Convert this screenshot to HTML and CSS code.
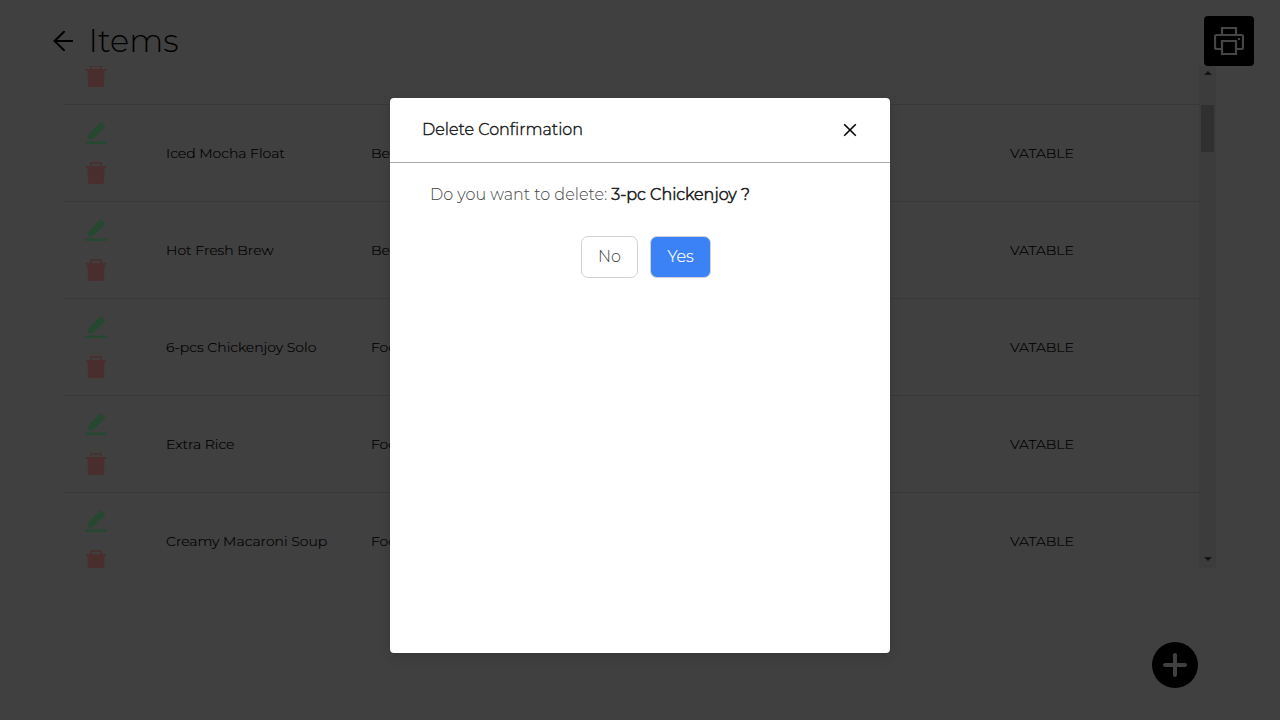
FILE: index.html
```html
<!DOCTYPE html>
<html lang="en">
<head>
<meta charset="utf-8">
<title>Items</title>
<link rel="stylesheet" href="styles.css">
</head>
<body>
<svg width="0" height="0" class="defs">
  <symbol id="edit" viewBox="0 0 22 22"><path d="M3.2 17.3 3.6 12.2 15 .8Q15.8 0 16.6.8L19.8 4Q20.4 4.6 19.8 5.4L9 16.3Q8 17.3 6.6 17.3ZM0 20.8Q0 19.6 1 19.6H21Q22 19.6 22 20.8Q22 22 21 22H1Q0 22 0 20.8Z"/></symbol>
  <symbol id="trash" viewBox="0 0 22 22"><path fill-rule="evenodd" d="M5 4V1.8Q5 0 6.8 0H15.2Q17 0 17 1.8V4H21V6H19.6L19 20Q18.9 22 17 22H5Q3.1 22 3 20L2.4 6H1V4ZM6.7 4H15.3V1.8H6.7Z"/></symbol>
</svg>
<header class="topbar">
  <svg class="back" viewBox="0 0 20 20"><path d="M11 .8 1.6 10l9.4 9.2M1.4 10H20"/></svg>
  <h1 class="title">Items</h1>
  <button class="print" aria-label="Print"><svg viewBox="0 0 30 30"><path d="M8 9V2H22V9M8 23H2.5Q1 23 1 21.5V10.5Q1 9 2.5 9H27.5Q29 9 29 10.5V21.5Q29 23 27.5 23H22M8 15H22V28H8Z"/><path class="dot" d="M24 12h2v2h-2z"/></svg></button>
</header>
<main class="list">
  <div class="rows">
    <div class="row first"><div class="actions"><svg class="edit"><use href="#edit"/></svg><svg class="trash"><use href="#trash"/></svg></div></div>
    <div class="row"><div class="actions"><svg class="edit"><use href="#edit"/></svg><svg class="trash"><use href="#trash"/></svg></div><span>Iced Mocha Float</span><span>Beverage</span><span>VATABLE</span></div>
    <div class="row"><div class="actions"><svg class="edit"><use href="#edit"/></svg><svg class="trash"><use href="#trash"/></svg></div><span>Hot Fresh Brew</span><span>Beverage</span><span>VATABLE</span></div>
    <div class="row"><div class="actions"><svg class="edit"><use href="#edit"/></svg><svg class="trash"><use href="#trash"/></svg></div><span>6-pcs Chickenjoy Solo</span><span>Food</span><span>VATABLE</span></div>
    <div class="row"><div class="actions"><svg class="edit"><use href="#edit"/></svg><svg class="trash"><use href="#trash"/></svg></div><span>Extra Rice</span><span>Food</span><span>VATABLE</span></div>
    <div class="row"><div class="actions"><svg class="edit"><use href="#edit"/></svg><svg class="trash"><use href="#trash"/></svg></div><span>Creamy Macaroni Soup</span><span>Food</span><span>VATABLE</span></div>
  </div>
  <div class="scrollbar"><i class="up"></i><div class="thumb"></div><i class="down"></i></div>
</main>
<button class="add" aria-label="Add"><svg viewBox="0 0 24 24"><path d="M12 2V22M2 12H22"/></svg></button>
<section class="modal" role="dialog">
  <div class="modal-head"><h2>Delete Confirmation</h2><svg viewBox="0 0 14 14"><path d="M1.2 1.2 12.8 12.8M12.8 1.2 1.2 12.8"/></svg></div>
  <p class="question"><span class="ask">Do you want to delete:</span><strong>3-pc Chickenjoy ?</strong></p>
  <div class="buttons"><button class="no">No</button><button class="yes">Yes</button></div>
</section>
</body>
</html>
```
FILE: styles.css
```css
* { box-sizing: border-box; }
body { margin: 0; width: 1280px; height: 720px; overflow: hidden; background: #404040; color: #000; font-family: Montserrat, Inter, sans-serif; font-weight: 300; }
h1, h2, p { margin: 0; }
button { padding: 0; border: 0; font: inherit; }
.defs { position: absolute; }
.topbar { display: flex; height: 66px; padding: 16px 26px 0 53px; }
.back { width: 20px; height: 20px; margin-top: 15px; fill: none; stroke: #000; stroke-width: 2; stroke-linecap: round; }
.title { margin-left: 15.5px; line-height: 50px; font-size: 32px; font-weight: 300; }
.print { display: flex; align-items: center; justify-content: center; width: 50px; height: 50px; margin-left: auto; border-radius: 4px; background: #000; }
.print svg { width: 30px; height: 30px; fill: none; stroke: #454545; stroke-width: 2.2; }
.print .dot { fill: #454545; stroke: none; }
.list { display: flex; width: 1152px; height: 502px; margin-left: 64px; overflow: hidden; }
.rows { width: 1135px; }
.row { display: grid; grid-template-columns: 102px 205px 639px 1fr; align-items: center; height: 97px; border-bottom: 1px solid #383838; font-size: 14px; white-space: nowrap; -webkit-text-stroke: .2px #000; }
.first { margin-top: -58px; }
.actions { display: flex; flex-direction: column; gap: 18px; padding-left: 21px; }
.actions svg { width: 22px; height: 22px; -webkit-text-stroke: 0; }
.edit { fill: #264730; }
.trash { fill: #4a2e2e; }
.scrollbar { display: flex; flex-direction: column; align-items: center; width: 17px; background: #3c3c3c; }
.up, .down { width: 0; height: 0; border: 4px solid transparent; }
.up { margin-top: 1px; border-bottom-color: #141414; }
.down { margin: auto 0 1px; border-top-color: #141414; transform: translateY(-2px); }
.thumb { width: 13px; height: 47px; margin-top: 30px; background: #303030; }
.add { position: absolute; left: 1152px; top: 642px; display: grid; place-items: center; width: 46px; height: 46px; border-radius: 50%; background: #000; }
.add svg { width: 24px; height: 24px; stroke: #404040; stroke-width: 4; stroke-linecap: round; }
.modal { position: absolute; left: 390px; top: 98px; width: 500px; height: 555px; border-radius: 4px; background: #fff; box-shadow: 0 4px 12px rgba(0,0,0,.15); font-size: 16px; }
.modal-head { display: flex; align-items: center; justify-content: space-between; height: 65px; padding: 0 33px 0 32px; border-bottom: 1px solid #aaa; }
.modal-head h2 { margin-top: -2px; font-size: 16px; font-weight: 300; -webkit-text-stroke: .4px #222; }
.modal-head svg { width: 14px; height: 14px; stroke: #000; stroke-width: 1.6; }
.question { display: flex; gap: 4px; padding: 20px 40px 0; line-height: 24px; white-space: nowrap; }
.ask { color: #444; }
.question strong { font-weight: 300; -webkit-text-stroke: .6px #222; }
.buttons { display: flex; gap: 12px; margin: 29px 0 0 191px; }
.buttons button { height: 42px; padding-bottom: 2px; border: 1px solid #d1d1d9; border-radius: 7px; }
.buttons .no { width: 57px; background: #fff; color: #444; }
.buttons .yes { width: 61px; background: #3b82f6; color: #fff; -webkit-text-stroke: .2px #fff; }
```
